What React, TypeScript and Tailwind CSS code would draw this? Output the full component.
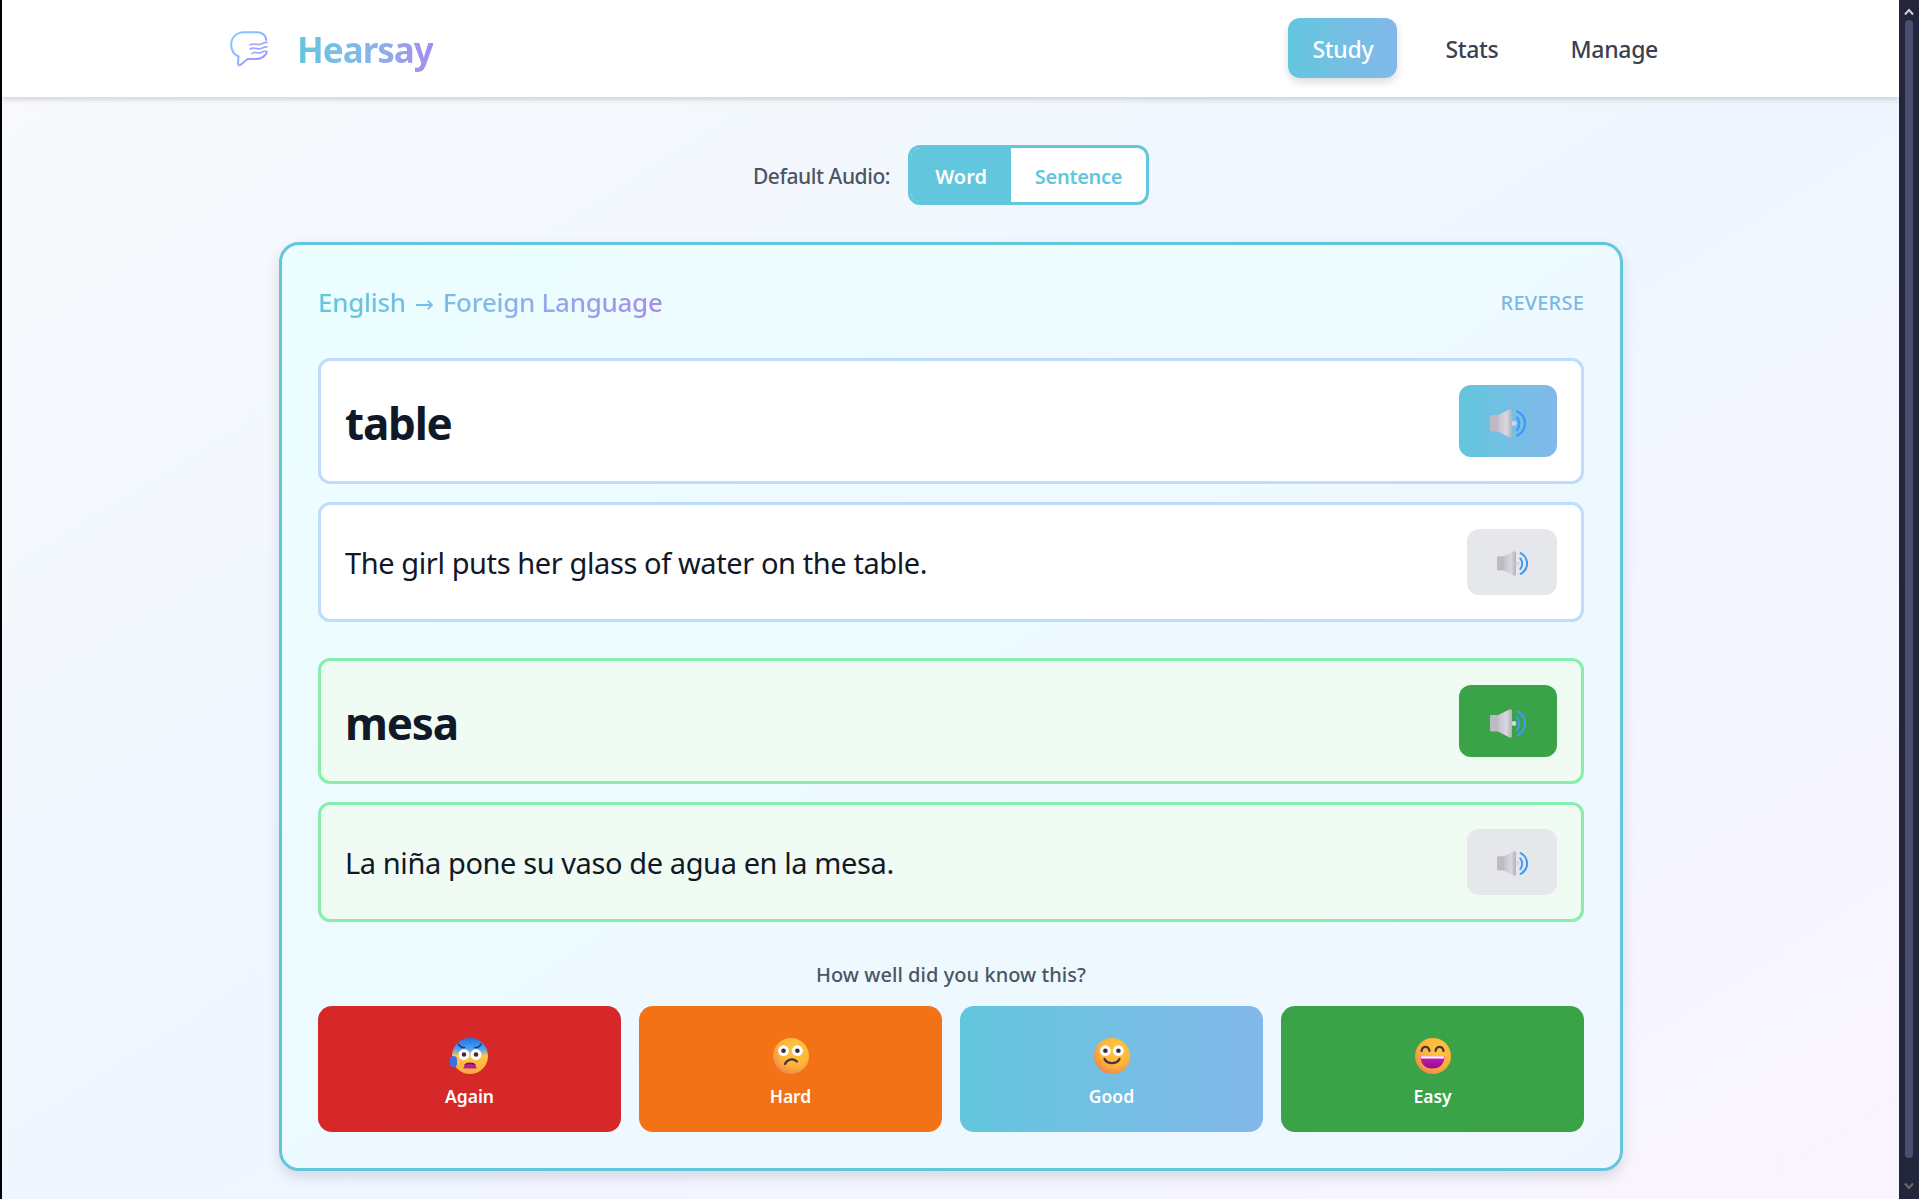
import { useId } from 'react';

const Logo = () => {
  const id = useId();
  return (
    <svg width="38" height="36" viewBox="0 0 38 36" fill="none">
      <defs>
        <linearGradient id={id} x1="0" y1="0" x2="1" y2="1">
          <stop offset="0" stopColor="#7dd3fc" />
          <stop offset="1" stopColor="#a78bfa" />
        </linearGradient>
      </defs>
      <path
        d="M36.5 9C35.5 4 32 1.2 27 1.2H14C6.5 1.2 1.2 6.5 1.2 13.5C1.2 19.5 3.8 23.5 8.5 25.5L8 32C8 34.5 9.5 35 11 33.5L17.5 28H26C31 28 34.5 26 36.5 22"
        stroke={`url(#${id})`}
        strokeWidth="2"
        strokeLinecap="round"
      />
      <path
        d="M20 14C24 11 27 15 31 13C33.5 12 35 11 37 11.5M20 18C24 15.5 27 19 31 17.5C33.5 16.5 35 15.5 37 16M22 22.5C25 20 28 23 31 21.5C33 20.5 35 20 37 20.5"
        stroke="#9fa8f5"
        strokeWidth="1.6"
        strokeLinecap="round"
      />
    </svg>
  );
};

const Speaker = ({ small }: { small?: boolean }) => {
  const id = useId();
  return (
    <svg width={small ? 31 : 36} height={small ? 25 : 29} viewBox="0 0 36 29" fill="none">
      <defs>
        <linearGradient id={id} x1="0" y1="0" x2="1" y2="0">
          <stop offset="0" stopColor="#c4c1cc" />
          <stop offset="0.6" stopColor="#d9d7df" />
          <stop offset="1" stopColor="#b2afbc" />
        </linearGradient>
      </defs>
      <path d="M1.5 6H9V22.5H1.5C.6 22.5 0 21.9 0 21V7.5C0 6.6.6 6 1.5 6Z" fill="#bdbac6" />
      <path d="M8 6L19.5.5C21 0 22 .6 22 2V27C22 28.6 20.8 29.2 19.5 28.5L8 22.5Z" fill={`url(#${id})`} />
      <circle cx="24" cy="14.5" r="2.4" fill="#d8d6dc" />
      <path d="M27 8.5C30 12 30 17.5 27 21" stroke="#3d9bf5" strokeWidth="2.2" strokeLinecap="round" />
      <path d="M27.5 2.5C37.5 8 37.5 21 27.5 26.5" stroke="#3d9bf5" strokeWidth="2.4" strokeLinecap="round" />
    </svg>
  );
};

type Face = 'again' | 'hard' | 'good' | 'easy';

const Emoji = ({ face }: { face: Face }) => {
  const id = useId();
  const skin = `${id}s`;
  const cold = `${id}c`;
  const mouth = `${id}m`;
  const eyes = (cy: number, lx: number, rx: number) => (
    <>
      <circle cx={lx} cy={cy} r="5.4" fill="#fff" />
      <circle cx={rx} cy={cy} r="5.4" fill="#fff" />
      <circle cx={lx} cy={cy} r="2.3" fill="#3d2c3a" />
      <circle cx={rx} cy={cy} r="2.3" fill="#3d2c3a" />
    </>
  );
  return (
    <svg width="36" height="36" viewBox="0 0 36 36" fill="none" className="overflow-visible">
      <defs>
        <radialGradient id={skin} cx="0.62" cy="0.32" r="0.78">
          <stop offset="0" stopColor="#ffc83d" />
          <stop offset="0.6" stopColor="#fdb23a" />
          <stop offset="0.88" stopColor="#f68a48" />
          <stop offset="1" stopColor="#e9749a" />
        </radialGradient>
        <linearGradient id={cold} x1="0" y1="0" x2="0" y2="1">
          <stop offset="0" stopColor="#1f74e0" />
          <stop offset="0.3" stopColor="#4ea0f5" />
          <stop offset="0.5" stopColor="#ffc84a" />
          <stop offset="1" stopColor="#fba83c" />
        </linearGradient>
        <linearGradient id={mouth} x1="0" y1="0" x2="0" y2="1">
          <stop offset="0" stopColor="#d21fb8" />
          <stop offset="1" stopColor="#8b0d8f" />
        </linearGradient>
      </defs>
      <circle cx="18" cy="18" r="18" fill={`url(#${face === 'again' ? cold : skin})`} />
      {face === 'again' && (
        <>
          <path d="M6.5 6C8 9 10 10 12.5 9.5M29 6C27.5 9 25.5 10 23 9.5" stroke="#2c3566" strokeWidth="1.6" strokeLinecap="round" />
          {eyes(16.5, 12, 24)}
          <path d="M11.5 30.5C11.5 23 24.5 23 24.5 30.5Z" fill="#c2188f" />
          <path d="M12.5 27C14.5 24.5 21.5 24.5 23.5 27" stroke="#3d2c3a" strokeWidth="1.2" />
          <rect x="-2" y="18" width="7" height="11" rx="3.5" fill="#3b6fe8" />
        </>
      )}
      {face === 'hard' && (
        <>
          {eyes(12.7, 10.5, 24.4)}
          <path d="M12 26C14 21 20 20 24 23.5" stroke="#4a3340" strokeWidth="2.2" strokeLinecap="round" />
        </>
      )}
      {face === 'good' && (
        <>
          {eyes(12.7, 11.4, 24.4)}
          <path d="M10.5 21C13 26.5 23 26.5 25.5 21" stroke="#4a3340" strokeWidth="2.4" strokeLinecap="round" />
        </>
      )}
      {face === 'easy' && (
        <>
          <path d="M6.5 13C7.5 7.5 13.5 7.5 14.5 13M20.5 13C21.5 7.5 27.5 7.5 28.5 13" stroke="#4a3340" strokeWidth="2.2" strokeLinecap="round" />
          <path d="M5.5 18H29.5C29.5 26 25 30.5 17.5 30.5C10 30.5 5.5 26 5.5 18Z" fill={`url(#${mouth})`} />
          <path d="M5.8 18.2H29.2L28.8 20.6H6.2Z" fill="#fff" />
        </>
      )}
    </svg>
  );
};

const PHRASE_BLUE = 'border-[#bfdbfe] bg-white';
const PHRASE_GREEN = 'border-[#86efac] bg-[#f0fbf4]';

const WordRow = ({ text, tone, btn }: { text: string; tone: string; btn: string }) => (
  <div className={`flex items-center justify-between rounded-[12px] border-[3px] p-[24px] ${tone}`}>
    <span className="pt-[4px] text-[44px] leading-none font-bold tracking-[-1.2px] text-[#111827]">{text}</span>
    <button className={`flex h-[72px] w-[98px] items-center justify-center rounded-[12px] pt-[5px] ${btn}`}>
      <Speaker />
    </button>
  </div>
);

const SentenceRow = ({ text, tone }: { text: string; tone: string }) => (
  <div className={`flex items-center justify-between rounded-[12px] border-[3px] p-[24px] ${tone}`}>
    <span className="text-[29px] leading-none tracking-[-0.4px] text-[#111827]">{text}</span>
    <button className="flex h-[66px] w-[90px] items-center justify-center rounded-[12px] bg-[#e5e7eb] pt-[3px]">
      <Speaker small />
    </button>
  </div>
);

const ratings: { label: string; face: Face; cls: string }[] = [
  { label: 'Again', face: 'again', cls: 'bg-[#d62828]' },
  { label: 'Hard', face: 'hard', cls: 'bg-[#f47216]' },
  { label: 'Good', face: 'good', cls: 'bg-linear-to-r from-[#62c6dd] to-[#82b8ea]' },
  { label: 'Easy', face: 'easy', cls: 'bg-[#3aa348]' },
];

const App = () => {
  return (
    <div className="flex h-[1199px] w-full overflow-hidden bg-black font-['Noto_Sans',sans-serif]">
      <div className="ml-[2px] flex min-w-0 flex-1 flex-col bg-linear-to-br from-[#f8fafc] via-[#eff6ff] to-[#faf5ff]">
        <header className="flex h-[97px] shrink-0 items-center justify-between bg-white pr-[217px] pl-[228px] shadow-[0_2px_6px_rgba(0,0,0,0.18)]">
          <div className="flex items-center gap-[29px]">
            <Logo />
            <span className="bg-linear-to-r from-[#62c6dd] via-[#85b7ea] to-[#a78bea] bg-clip-text pt-[2px] text-[35px] leading-[1.4] font-bold tracking-[-1px] text-transparent">
              Hearsay
            </span>
          </div>
          <nav className="-mt-[1px] flex items-center gap-[24px] text-[23px] font-medium tracking-[-0.3px] text-[#374151]">
            <a className="flex h-[60px] w-[109px] items-center justify-center rounded-[12px] bg-linear-to-r from-[#62c6dd] to-[#82b8ea] pt-[2px] text-white shadow-[0_4px_8px_rgba(0,0,0,0.14)]">
              Study
            </a>
            <a className="px-[24px] pt-[2px]">Stats</a>
            <a className="px-[24px] pt-[2px]">Manage</a>
          </nav>
        </header>

        <div className="pl-[1px]">
          <div className="mt-[48px] flex items-center justify-center gap-[18px]">
            <span className="pt-[4px] text-[21px] font-medium tracking-[-0.45px] text-[#4b5563]">Default Audio:</span>
            <div className="flex h-[60px] w-[241px] overflow-hidden rounded-[12px] border-[3px] border-[#62c6dd] bg-white text-[20px] font-semibold">
              <span className="flex w-[100px] items-center justify-center bg-[#62c6dd] pt-[4px] text-white">Word</span>
              <span className="flex flex-1 items-center justify-center pt-[4px] tracking-[-0.3px] text-[#62c6dd]">Sentence</span>
            </div>
          </div>

          <main className="mx-auto mt-[37px] w-[1344px] rounded-[20px] border-[3px] border-[#62c6dd] bg-linear-to-br from-[#ecfeff] to-[#eff6ff] p-[36px] shadow-[0_6px_14px_rgba(0,0,0,0.12)]">
            <div className="mb-[33px] flex h-[44px] items-center justify-between">
              <span className="bg-linear-to-r from-[#62c6dd] via-[#85b7ea] to-[#a78bea] bg-clip-text text-[26px] leading-[36px] font-medium tracking-[-0.3px] text-transparent">
                English <span className="mx-[2.5px] font-['DejaVu_Sans',sans-serif] text-[23px] font-normal">→</span> Foreign Language
              </span>
              <span className="text-[20px] font-medium tracking-[0.2px] text-[#7fb6e8]">REVERSE</span>
            </div>

            <div className="flex flex-col gap-[18px]">
              <WordRow text="table" tone={PHRASE_BLUE} btn="bg-linear-to-r from-[#62c6dd] to-[#82b8ea]" />
              <SentenceRow text="The girl puts her glass of water on the table." tone={PHRASE_BLUE} />
            </div>
            <div className="mt-[36px] flex flex-col gap-[18px]">
              <WordRow text="mesa" tone={PHRASE_GREEN} btn="bg-[#3aa348]" />
              <SentenceRow text="La niña pone su vaso de agua en la mesa." tone={PHRASE_GREEN} />
            </div>

            <p className="mt-[38px] mb-[16px] text-center text-[20px] leading-[30px] font-medium tracking-[0.05px] text-[#4b5563]">
              How well did you know this?
            </p>
            <div className="grid grid-cols-4 gap-[18px]">
              {ratings.map((r) => (
                <button
                  key={r.label}
                  className={`flex h-[126px] flex-col items-center justify-start gap-[9px] rounded-[14px] pt-[32px] text-[17.5px] font-semibold text-white ${r.cls}`}
                >
                  <Emoji face={r.face} />
                  <span className="leading-[26px]">{r.label}</span>
                </button>
              ))}
            </div>
          </main>
        </div>
      </div>

      <aside className="flex w-[20px] shrink-0 flex-col items-center bg-[#23263a] py-[6px]">
        <svg width="10" height="8" viewBox="0 0 10 8" className="mt-[2px]">
          <path d="M1 6.5L5 2L9 6.5" stroke="#d0d0d4" strokeWidth="2" fill="none" />
        </svg>
        <div className="mt-[4px] h-[1138px] w-[8px] rounded-full bg-[#4a4e6e]" />
        <svg width="10" height="8" viewBox="0 0 10 8" className="mt-[24px]">
          <path d="M1 1.5L5 6L9 1.5" stroke="#6b6b70" strokeWidth="2" fill="none" />
        </svg>
      </aside>
    </div>
  );
};

export default App;
